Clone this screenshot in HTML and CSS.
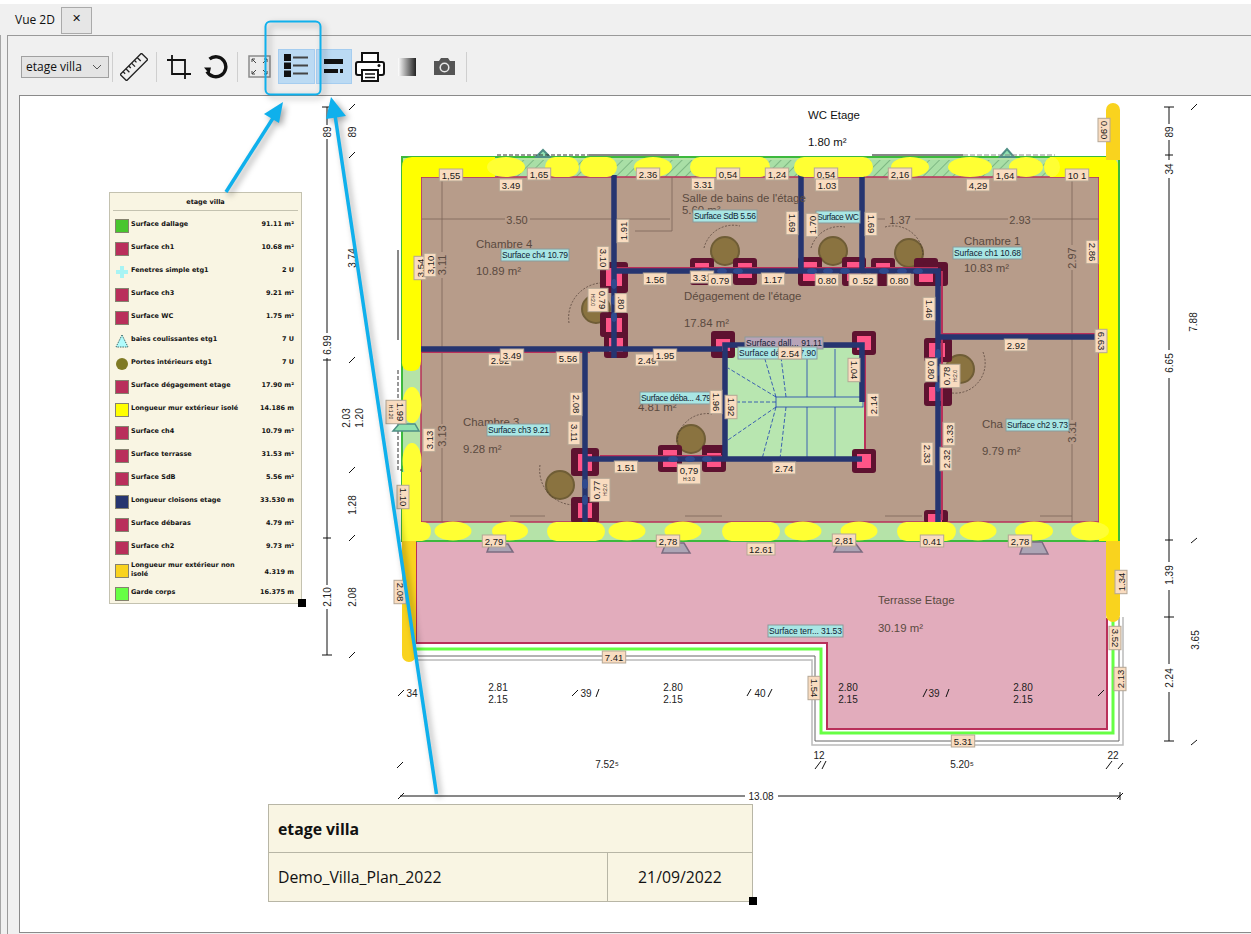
FILE: index.html
```html
<!DOCTYPE html>
<html lang="fr">
<head>
    <meta charset="UTF-8">
    <title>Vue 2D</title>
    <link rel="stylesheet" href="styles.css">
</head>
<body>

<div class="tabs">
    <span class="tab-title">Vue 2D</span>
    <button class="tab-close">&#x2715;</button>
</div>

<div class="workspace">
<div class="panel">
    <div class="toolbar">
        <div class="combo">etage villa
            <svg class="combo-arrow" width="10" height="6" viewBox="0 0 10 6"><path d="M1 1l4 4 4-4" fill="none" stroke="#555"/></svg>
        </div>
        <span class="sep"></span>
        <div class="tool tool-ruler">
            <svg width="28" height="28" viewBox="0 0 28 28"><g transform="rotate(-45 14 14)" fill="none" stroke="#222" stroke-width="1.3"><rect x="-1" y="9.5" width="30" height="9"/><path d="M3 9.5v3M7 9.5v5M11 9.5v3M15 9.5v5M19 9.5v3M23 9.5v5"/></g></svg>
        </div>
        <span class="sep"></span>
        <div class="tool tool-crop">
            <svg width="24" height="24" viewBox="0 0 24 24"><path d="M5 0v19h19M0 5h18v19" fill="none" stroke="#111" stroke-width="1.800"/></svg>
        </div>
        <div class="tool tool-rotate">
            <svg width="24" height="24" viewBox="0 0 24 24"><path d="M5.500 4A10 10 0 1 1 3 16.500" fill="none" stroke="#111" stroke-width="3.400"/><path d="M0 12.500l7 0-1.500 6.500z" fill="#111"/></svg>
        </div>
        <span class="sep sep-fit"></span>
        <div class="tool tool-fit">
            <svg width="23" height="23" viewBox="0 0 23 23"><rect x="1" y="1" width="21" height="21" fill="#ececec" stroke="#8a8a8a" stroke-width="1.500"/><path d="M4 4l4 4M4 4h3M4 4v3M19 4l-4 4M19 4h-3M19 4v3M4 19l4-4M4 19h3M4 19v-3M19 19l-4-4M19 19h-3M19 19v-3" fill="none" stroke="#444"/></svg>
        </div>
        <div class="toggle toggle-list">
            <svg width="26" height="24" viewBox="0 0 26 24"><path d="M0 0h7v7H0zM0 8.500h7v6.500H0zM0 16.500h7V23H0z" fill="#111"/><path d="M9 3.500h15M9 11.500h15M9 19.500h15" stroke="#444" stroke-width="2"/></svg>
        </div>
        <div class="toggle toggle-bars">
            <svg width="20" height="14" viewBox="0 0 20 14"><path d="M0 0h19v5H0zM0 10h14v4H0zM16 10h3v4h-3z" fill="#111"/></svg>
        </div>
        <div class="tool tool-print">
            <svg width="30" height="30" viewBox="0 0 30 30"><path d="M7 10V1h16v9" fill="#fff" stroke="#111" stroke-width="2"/><path d="M6 23H3a2 2 0 0 1-2-2V12a2 2 0 0 1 2-2h24a2 2 0 0 1 2 2v9a2 2 0 0 1-2 2h-3" fill="#fff" stroke="#111" stroke-width="2"/><path d="M7 18h16v11H7z" fill="#fff" stroke="#111" stroke-width="2"/><path d="M10 22h10M10 25.500h10" stroke="#111" stroke-width="1.500"/><circle cx="24" cy="13.500" r="1.500" fill="#111"/></svg>
        </div>
        <div class="tool-gradient"></div>
        <div class="tool tool-camera">
            <svg width="23" height="19" viewBox="0 0 23 19"><path d="M1 4h5l2-3h7l2 3h5v14H1z" fill="#555"/><circle cx="11.500" cy="10.500" r="5" fill="#e8e8e8"/><circle cx="11.500" cy="10.500" r="3.500" fill="#555"/></svg>
        </div>
        <span class="sep sep-end"></span>
    </div>

    <div class="canvas">
        <svg class="plan" id="plan" width="1238" height="836" viewBox="20 96 1238 836">
            <defs>
                <pattern id="hatch" width="7" height="7" patternUnits="userSpaceOnUse" patternTransform="rotate(45)">
                    <rect width="7" height="7" fill="#a9dfa6"/>
                    <path d="M0 0v7" stroke="#3d7d4e" stroke-width="0.8"/>
                </pattern>
            </defs>

            <!-- terrasse -->
            <path d="M416 541H1106V618L1107 729H827V643H416z" fill="#e2acbc"/>
            <path d="M416 541V643H827V729H1107V618" fill="none" stroke="#b9305a" stroke-width="2"/>
            <path d="M416 649H821V733H1113V617" fill="none" stroke="#66ff44" stroke-width="3"/>
            <path d="M416 656H815V741H1119V617" fill="none" stroke="#666" stroke-width="1"/>
            <path d="M416 660H812V745H1123V617" fill="none" stroke="#bbb" stroke-width="1.500"/>

            <!-- bande mur exterieur -->
            <rect x="402" y="157" width="717" height="384" fill="#b5e3a8"/>
            <rect x="402" y="157" width="717" height="384" fill="none" stroke="#3db93d" stroke-width="2"/>
            <rect x="420" y="160" width="680" height="17" fill="url(#hatch)"/>
            <path d="M536 157l7-7 7 7z" fill="#8fe0b0" stroke="#4f8f85" stroke-width="2"/>
            <path d="M1000 157l7-8 7 8z" fill="#8fe0b0" stroke="#4f8f85" stroke-width="2"/>

            <!-- fenetres -->
            <g fill="none" stroke="#333" stroke-width="1">
                <path d="M497 155H589" stroke-dasharray="4 2"/>
                <path d="M589 155H679" stroke="#111"/>
                <path d="M872 155H963" stroke="#111"/>
                <path d="M963 155H1055" stroke="#888" stroke-dasharray="5 2"/>
                <path d="M398 250V340" stroke="#111"/>
                <path d="M398 370V470H402" stroke-dasharray="4 2"/>
            </g>

            <!-- pieces -->
            <rect x="421" y="177" width="678" height="345" fill="#b79c8a" stroke="#b9305a" stroke-width="1.500"/>
            <path d="M725 348H865V459H725z" fill="#b8e6b0"/>
            <path d="M865 348V459" stroke="#b9305a" stroke-width="2"/>
            <g fill="none" stroke="#1c3fb0" stroke-width="0.800">
                <path d="M807 349V397M835 349V397M807 407V459M835 407V459" />
                <path d="M776 397L762 349M776 397L728 368M776 407L728 440M776 407L762 459" stroke-dasharray="4 2"/>
                <path d="M786 397L780 349M786 407L780 459M776 402H728" stroke-dasharray="4 2"/>
            </g>
            <rect x="776" y="397" width="87" height="10" fill="#b8e6b0" stroke="#1c3fb0" stroke-width="0.800"/>

            <!-- cotes interieures -->
            <g fill="none" stroke="#7c6658" stroke-width="0.800">
                <path d="M422 219H505M530 219H670"/>
                <path d="M672 177V231H635"/>
                <path d="M442 177V252M442 278V348M442 350V424M442 448V522"/>
                <path d="M1072 177V245M1072 270V337M1072 338V420M1072 444V522"/>
                <path d="M870 219H885M915 219H1008M1032 219H1099"/>
                <path d="M510 516H545M685 516H722M885 516H922M1040 516H1072"/>
            </g>

            <!-- portes -->
            <g fill="#8a7340" stroke="#6f5d36" stroke-width="2">
                <circle cx="725" cy="251" r="14"/>
                <circle cx="596" cy="309" r="14"/>
                <circle cx="833" cy="251" r="14"/>
                <circle cx="909" cy="253" r="14"/>
                <circle cx="691" cy="439" r="14"/>
                <circle cx="560" cy="485" r="14"/>
                <circle cx="960" cy="369" r="14"/>
            </g>
            <g fill="none" stroke="#4a3a30" stroke-width="0.700" stroke-dasharray="2 1.500">
                <path d="M704 248A30 30 0 0 1 740 226"/>
                <path d="M569 323A35 35 0 0 1 600 283"/>
                <path d="M811 248A30 30 0 0 1 845 227"/>
                <path d="M885 227A30 30 0 0 1 923 255"/>
                <path d="M677 442A30 30 0 0 1 712 414"/>
                <path d="M540 465A35 35 0 0 0 575 505"/>
                <path d="M983 352A30 30 0 0 1 952 393"/>
            </g>

            <!-- jambages -->
            <g fill="#5e1230">
                <rect x="600" y="262" width="28" height="31" rx="3"/>
                <rect x="600" y="312" width="28" height="25" rx="3"/>
                <rect x="604" y="333" width="24" height="25" rx="3"/>
                <rect x="690" y="258" width="24" height="27" rx="3"/>
                <rect x="733" y="258" width="24" height="27" rx="3"/>
                <rect x="711" y="331" width="24" height="27" rx="3"/>
                <rect x="798" y="257" width="24" height="29" rx="3"/>
                <rect x="842" y="257" width="24" height="29" rx="3"/>
                <rect x="871" y="258" width="24" height="28" rx="3"/>
                <rect x="914" y="258" width="24" height="28" rx="3"/>
                <rect x="923" y="262" width="25" height="24" rx="3"/>
                <rect x="852" y="331" width="24" height="24" rx="3"/>
                <rect x="924" y="338" width="28" height="24" rx="3"/>
                <rect x="924" y="382" width="28" height="24" rx="3"/>
                <rect x="852" y="449" width="24" height="24" rx="3"/>
                <rect x="924" y="510" width="24" height="13" rx="3"/>
                <rect x="571" y="448" width="28" height="28" rx="3"/>
                <rect x="571" y="497" width="28" height="26" rx="3"/>
                <rect x="658" y="445" width="24" height="27" rx="3"/>
                <rect x="702" y="445" width="24" height="27" rx="3"/>
            </g>
            <g fill="#ff5588">
                <rect x="606" y="268" width="16" height="18"/>
                <rect x="606" y="318" width="16" height="14"/>
                <rect x="609" y="338" width="14" height="14"/>
                <rect x="695" y="263" width="14" height="15"/>
                <rect x="738" y="263" width="14" height="15"/>
                <rect x="716" y="339" width="14" height="12"/>
                <rect x="803" y="262" width="14" height="19"/>
                <rect x="847" y="262" width="14" height="19"/>
                <rect x="876" y="263" width="14" height="9"/>
                <rect x="919" y="268" width="14" height="14"/>
                <rect x="857" y="336" width="14" height="14"/>
                <rect x="929" y="343" width="16" height="14"/>
                <rect x="929" y="387" width="12" height="14"/>
                <rect x="857" y="454" width="14" height="14"/>
                <rect x="928" y="514" width="14" height="9"/>
                <rect x="578" y="454" width="14" height="17"/>
                <rect x="578" y="503" width="14" height="15"/>
                <rect x="663" y="450" width="14" height="17"/>
                <rect x="707" y="453" width="14" height="14"/>
            </g>

            <!-- cloisons -->
            <path d="M614 268H938M942 334H1099M420 352H590M600 456H722M942 271V520" fill="none" stroke="#b9305a" stroke-width="2"/>
            <g fill="none" stroke="#263570" stroke-width="5.500">
                <path d="M614 175V358M801 175V271M862 175V271M614 271H938V522M938 337H1099"/>
                <path d="M420 349H722M725 459V345H862V402M585 349V522M585 459H862"/>
            </g>
            <g fill="#2f4a8e">
                <ellipse cx="614" cy="284" rx="3" ry="5"/>
                <ellipse cx="614" cy="300" rx="3" ry="5"/>
                <ellipse cx="614" cy="317" rx="3" ry="5"/>
                <ellipse cx="585" cy="484" rx="3" ry="5"/>
                <ellipse cx="585" cy="500" rx="3" ry="5"/>
                <ellipse cx="938" cy="354" rx="3" ry="5"/>
                <ellipse cx="938" cy="371" rx="3" ry="5"/>
                <ellipse cx="938" cy="387" rx="3" ry="5"/>
                <ellipse cx="705" cy="271" rx="5" ry="3"/>
                <ellipse cx="722" cy="271" rx="5" ry="3"/>
                <ellipse cx="738" cy="271" rx="5" ry="3"/>
                <ellipse cx="812" cy="271" rx="5" ry="3"/>
                <ellipse cx="828" cy="271" rx="5" ry="3"/>
                <ellipse cx="845" cy="271" rx="5" ry="3"/>
                <ellipse cx="884" cy="271" rx="5" ry="3"/>
                <ellipse cx="902" cy="271" rx="5" ry="3"/>
                <ellipse cx="918" cy="271" rx="5" ry="3"/>
                <ellipse cx="673" cy="459" rx="5" ry="3"/>
                <ellipse cx="690" cy="459" rx="5" ry="3"/>
                <ellipse cx="707" cy="459" rx="5" ry="3"/>
            </g>

            <!-- mur exterieur isole -->
            <path d="M402 167Q402 157 412 157H495V177H421V361Q421 371 411 371T402 361z" fill="#ffff00"/>
            <path d="M1050 157H1108Q1118 157 1118 167V541H1099V177H1050z" fill="#ffff00"/>
            <g fill="#ffff33">
                <ellipse cx="412" cy="405" rx="9.500" ry="18"/>
                <ellipse cx="412" cy="461" rx="9.500" ry="18"/>
                <path d="M402 472H421V522H422Q431 522 431 531T422 541H402z"/>
                <ellipse cx="506" cy="167" rx="19" ry="10"/>
                <rect x="545" y="157" width="34" height="20" rx="10"/>
                <rect x="580" y="157" width="37" height="20" rx="10"/>
                <ellipse cx="653" cy="167" rx="19" ry="10"/>
                <rect x="690" y="157" width="80" height="20" rx="10"/>
                <rect x="794" y="157" width="79" height="20" rx="10"/>
                <ellipse cx="910" cy="167" rx="19" ry="10"/>
                <ellipse cx="970" cy="167" rx="22" ry="10"/>
                <ellipse cx="1026" cy="167" rx="17" ry="10"/>
                <ellipse cx="1052" cy="167" rx="8" ry="10"/>
                <ellipse cx="453" cy="531" rx="18.500" ry="9.500"/>
                <ellipse cx="510" cy="531" rx="18" ry="9.500"/>
                <rect x="547" y="522" width="58" height="19" rx="9.500"/>
                <ellipse cx="627" cy="531" rx="18.500" ry="9.500"/>
                <ellipse cx="683" cy="531" rx="18.500" ry="9.500"/>
                <rect x="722" y="522" width="58" height="19" rx="9.500"/>
                <ellipse cx="803" cy="531" rx="18.500" ry="9.500"/>
                <ellipse cx="859" cy="531" rx="18.500" ry="9.500"/>
                <rect x="897" y="522" width="59" height="19" rx="9.500"/>
                <ellipse cx="978" cy="531" rx="18.500" ry="9.500"/>
                <ellipse cx="1034" cy="531" rx="19" ry="9.500"/>
                <ellipse cx="1090" cy="531" rx="19" ry="9.500"/>
            </g>

            <!-- mur non isole -->
            <g fill="#f9d31e">
                <path d="M1106 160V110a7 7 0 0 1 14 0V160z"/>
                <path d="M1106 541H1120V615a7 7 0 0 1-14 0z"/>
                <path d="M402 541H416V655a7 7 0 0 1-14 0z"/>
            </g>

            <!-- seuils -->
            <g fill="#aca5b5" stroke="#7c6c80" stroke-width="1.500">
                <path d="M490 544H508L513 552H487z"/>
                <path d="M666 543H684L690 553H662z"/>
                <path d="M838 544H856L862 552H834z"/>
                <path d="M1024 542H1042L1048 554H1020z"/>
            </g>
            <path d="M393 431L399 424H415L419 431z" fill="#8fe0b0" stroke="#4f8f85" stroke-width="1.500"/>

            <!-- lignes de cote -->
            <g fill="none" stroke="#111" stroke-width="1">
                <path d="M327 107V125M327 139V333M327 358V585M327 609V655"/>
                <path d="M322 107H332M322 655H332M323 360H331M323 538H331"/>
                <path d="M1169 107V124M1169 140V160M1169 178V350M1169 378V562M1169 590V664M1169 692V741"/>
                <path d="M1164 107H1174M1164 617H1174M1164 741H1174M1165 155H1173M1165 540H1173"/>
                <path d="M400 796H745M778 796H1120"/>
                <path d="M398 799L404 793M1117 799L1123 793M1120 792V800"/>
                <path d="M349 110L355 104M349 158L355 152M349 363L355 357M349 473L355 467M349 541L355 535M349 658L355 652"/>
                <path d="M1191 543L1197 538M1191 745L1197 740M1191 110L1197 104"/>
                <path d="M397 768L403 762M815 769L821 761M822 769L826 761M1106 769L1112 761M1118 769L1123 763"/>
                <path d="M398 696L404 690M572 696L578 690M596 697L599 689M747 696L751 689M768 697L772 689M923 697L927 689M946 697L949 689M1098 696L1104 690"/>
            </g>
        </svg>

        <div class="legend">
            <div class="legend-title">etage villa</div>
            <div class="legend-row"><span class="swatch sw-dallage"></span><span class="legend-name">Surface dallage</span><span class="legend-value">91.11 m²</span></div>
            <div class="legend-row"><span class="swatch sw-surface"></span><span class="legend-name">Surface ch1</span><span class="legend-value">10.68 m²</span></div>
            <div class="legend-row"><span class="swatch sw-shape"><svg width="14" height="14" viewBox="0 0 14 14"><path d="M5 1h4v4h4v4H9v4H5V9H1V5h4z" fill="#a8f4f4"/></svg></span><span class="legend-name">Fenetres simple etg1</span><span class="legend-value">2 U</span></div>
            <div class="legend-row"><span class="swatch sw-surface"></span><span class="legend-name">Surface ch3</span><span class="legend-value">9.21 m²</span></div>
            <div class="legend-row"><span class="swatch sw-surface"></span><span class="legend-name">Surface WC</span><span class="legend-value">1.75 m²</span></div>
            <div class="legend-row"><span class="swatch sw-shape"><svg width="14" height="14" viewBox="0 0 14 14"><path d="M7 1l6 12H1z" fill="#b0fbfb" stroke="#3c6a6a" stroke-dasharray="1.500 1"/></svg></span><span class="legend-name">baies coulissantes etg1</span><span class="legend-value">7 U</span></div>
            <div class="legend-row"><span class="swatch sw-shape"><svg width="14" height="14" viewBox="0 0 14 14"><circle cx="7" cy="7" r="6" fill="#7f7a24"/></svg></span><span class="legend-name">Portes intérieurs etg1</span><span class="legend-value">7 U</span></div>
            <div class="legend-row"><span class="swatch sw-surface"></span><span class="legend-name">Surface dégagement etage</span><span class="legend-value">17.90 m²</span></div>
            <div class="legend-row"><span class="swatch sw-isole"></span><span class="legend-name">Longueur mur extérieur isolé</span><span class="legend-value">14.186 m</span></div>
            <div class="legend-row"><span class="swatch sw-surface"></span><span class="legend-name">Surface ch4</span><span class="legend-value">10.79 m²</span></div>
            <div class="legend-row"><span class="swatch sw-surface"></span><span class="legend-name">Surface terrasse</span><span class="legend-value">31.53 m²</span></div>
            <div class="legend-row"><span class="swatch sw-surface"></span><span class="legend-name">Surface SdB</span><span class="legend-value">5.56 m²</span></div>
            <div class="legend-row"><span class="swatch sw-cloison"></span><span class="legend-name">Longueur cloisons etage</span><span class="legend-value">33.530 m</span></div>
            <div class="legend-row"><span class="swatch sw-surface"></span><span class="legend-name">Surface débaras</span><span class="legend-value">4.79 m²</span></div>
            <div class="legend-row"><span class="swatch sw-surface"></span><span class="legend-name">Surface ch2</span><span class="legend-value">9.73 m²</span></div>
            <div class="legend-row legend-row-tall"><span class="swatch sw-nonisole"></span><span class="legend-name">Longueur mur extérieur non isolé</span><span class="legend-value">4.319 m</span></div>
            <div class="legend-row"><span class="swatch sw-garde"></span><span class="legend-name">Garde corps</span><span class="legend-value">16.375 m</span></div>
            <span class="handle"></span>
        </div>

        <div class="title-block">
            <div class="title-name">etage villa</div>
            <div class="title-file">Demo_Villa_Plan_2022</div>
            <div class="title-date">21/09/2022</div>
            <span class="handle"></span>
        </div>
    </div>
</div>
</div>

<svg class="callouts" width="1251" height="934" viewBox="0 0 1251 934">
    <rect x="265.500" y="21.500" width="55" height="73" rx="5" fill="none" stroke="#0fb0ec" stroke-width="2"/>
    <path d="M226 192L275 115" stroke="#0fb0ec" stroke-width="3.500"/>
    <path d="M283 102L264 114L279 123z" fill="#0fb0ec"/>
    <path d="M436.500 794L335 115" stroke="#0fb0ec" stroke-width="3.500"/>
    <path d="M331 97L326 119L346 116z" fill="#0fb0ec"/>
</svg>

<script src="plan.js"></script>
</body>
</html>
```

FILE: styles.css
```css
* {
    box-sizing: border-box;
}
html, body {
    margin: 0;
    padding: 0;
}
body {
    width: 1251px;
    height: 934px;
    overflow: hidden;
    position: relative;
    background-color: #f0f0f0;
    border-top: 4px solid #fff;
    font-family: "Open Sans", "Noto Sans", sans-serif;
    color: #111;
}
.tabs {
    height: 31px;
    display: flex;
    align-items: flex-start;
    padding: 3px 0 0 15px;
}
.tab-title {
    font-size: 12px;
    line-height: 26px;
    width: 46px;
}
.tab-close {
    width: 31px;
    height: 27px;
    border: 1px solid #aaa;
    background-color: #e6e6e6;
    padding: 0 0 4px;
    font-size: 11px;
    font-weight: bold;
    font-family: "DejaVu Sans", sans-serif;
    color: #111;
}
.workspace {
    height: 899px;
    border-left: 1px solid #a5a5a5;
    padding-left: 6px;
}
.panel {
    height: 899px;
    border-left: 1px solid #9a9a9a;
    border-top: 1px solid #9a9a9a;
    padding-left: 11px;
}
.toolbar {
    height: 59px;
    display: flex;
    align-items: center;
    padding: 2px 0 0 2px;
}
.combo {
    width: 88px;
    height: 22px;
    border: 1px solid #a0a0a0;
    background-color: #e4e4e4;
    font-size: 12px;
    line-height: 20px;
    padding-left: 4px;
    position: relative;
    flex: none;
}
.combo-arrow {
    position: absolute;
    right: 6px;
    top: 7px;
}
.sep {
    width: 1px;
    height: 30px;
    background-color: #cfcfcf;
    flex: none;
    margin-left: 3px;
}
.tool {
    display: flex;
    align-items: center;
    justify-content: center;
    flex: none;
}
.tool-ruler {
    width: 28px;
    margin: 0 5px 0 7px;
}
.tool-crop {
    width: 24px;
    margin: 0 13px 0 10px;
}
.tool-rotate {
    width: 24px;
    margin-right: 7px;
}
.sep-fit {
    margin-left: 2px;
}
.tool-fit {
    width: 23px;
    margin: 0 7px 0 10px;
}
.toggle {
    width: 37px;
    height: 35px;
    flex: none;
    margin-top: -1px;
    background-color: #bbdaf3;
    border: 1px solid #a5cdf0;
    display: flex;
    align-items: center;
    justify-content: center;
}
.toggle-list {
    margin-right: 1px;
}
.toggle-bars {
    width: 36px;
    margin-right: 3px;
}
.tool-print {
    width: 30px;
}
.tool-gradient {
    width: 18px;
    height: 18px;
    margin: 0 17px 0 13px;
    flex: none;
    background: linear-gradient(to right, #fff, #222);
}
.tool-camera {
    width: 23px;
}
.sep-end {
    margin-left: 10px;
}
.canvas {
    position: relative;
    width: 1240px;
    height: 838px;
    background-color: #fff;
    border: 1px solid #8a8a8a;
}
.plan {
    display: block;
}
.plan-label rect {
    stroke: #b5a795;
    stroke-width: 1;
}
.plan-text {
    font-family: "Liberation Sans", sans-serif;
    font-size: 9.5px;
    fill: #1a1a1a;
    text-anchor: middle;
    dominant-baseline: central;
}
.plan-sub {
    font-size: 5px;
}
.surface-text {
    font-family: "Liberation Sans", sans-serif;
    font-size: 8.5px;
    fill: #123;
}
.room-text {
    font-family: "Liberation Sans", sans-serif;
    font-size: 11.4px;
    fill: #5a4a40;
}
.room-black {
    fill: #111;
}
.dim-text {
    font-family: "Liberation Sans", sans-serif;
    font-size: 10px;
    fill: #222;
    text-anchor: middle;
    dominant-baseline: central;
}
.dim-grey {
    fill: #5a4a40;
    font-size: 11px;
}
.legend {
    position: absolute;
    left: 89px;
    top: 96px;
    width: 193px;
    height: 412px;
    background-color: #f9f5e3;
    border: 1px solid #c4c2b0;
    padding: 0 7px 0 5px;
    font-family: "DejaVu Sans", sans-serif;
    font-size: 6.5px;
    font-weight: bold;
    color: #111;
}
.legend-title {
    height: 18px;
    line-height: 18px;
    text-align: center;
    border-bottom: 1px solid #c4c2b0;
    margin: 0 -4px 8px -2px;
}
.legend-row {
    display: flex;
    height: 23px;
    line-height: 9px;
}
.legend-row-tall .legend-name {
    margin-top: -4px;
}
.legend-row-tall .legend-value {
    padding-top: 4px;
}
.legend-name {
    width: 112px;
    padding-top: 1px;
}
.legend-value {
    margin-left: auto;
    padding-top: 1px;
    white-space: nowrap;
}
.swatch {
    width: 14px;
    height: 14px;
    margin-right: 2px;
    flex: none;
    border: 1px solid #85826f;
}
.sw-dallage { background-color: #48c62e; }
.sw-surface { background-color: #b92f5b; }
.sw-isole { background-color: #ffff00; }
.sw-cloison { background-color: #263570; }
.sw-nonisole { background-color: #f9d31e; }
.sw-garde { background-color: #66ff44; }
.sw-shape {
    border: none;
}
.sw-shape svg {
    display: block;
}
.handle {
    position: absolute;
    right: -5px;
    bottom: -4px;
    width: 8px;
    height: 8px;
    background-color: #000;
}
.title-block {
    position: absolute;
    left: 248px;
    top: 708px;
    width: 485px;
    height: 98px;
    background-color: #f9f5e3;
    border: 1px solid #b8b6a6;
    display: grid;
    grid-template-columns: 339px 1fr;
    grid-template-rows: 48px 1fr;
    font-size: 15.8px;
}
.title-name {
    grid-column: span 2;
    font-weight: bold;
    line-height: 48px;
    padding-left: 9px;
    border-bottom: 1px solid #b8b6a6;
}
.title-file {
    line-height: 48px;
    padding-left: 9px;
    border-right: 1px solid #b8b6a6;
}
.title-date {
    line-height: 48px;
    text-align: center;
}
.callouts {
    position: absolute;
    left: 0;
    top: -4px;
    pointer-events: none;
    filter: drop-shadow(3px 3px 3px rgba(0, 0, 0, 0.35));
}
```

FILE: plan.js
```js
// etiquettes du plan : x, y, texte, rotation, hauteur sous linteau
const svg = document.getElementById('plan');
const NS = 'http://www.w3.org/2000/svg';

const dimLabels = [
    [451, 175, '1,55'], [511, 185, '3.49'], [539, 174, '1,65'], [648, 174, '2.36'],
    [703, 184, '3.31'], [728, 174, '0,54'], [777, 174, '1,24'], [826, 174, '0,54'],
    [827, 185, '1.03'], [900, 174, '2,16'], [978, 185, '4,29'], [1005, 175, '1,64'],
    [1077, 175, '10 1'], [420, 268, '3,54', -90], [430, 265, '3,10', -90],
    [603, 258, '3.10', 90], [623, 231, '1.91', -90], [655, 279, '1.56'],
    [702, 277, '3.31'], [720, 280, '0.79'], [602, 300, '0.79', 90, 'H:2.0'], [621, 303, '.80', 90],
    [792, 223, '1.69', 90], [812, 225, '1.70', -90], [871, 224, '1.69', 90],
    [773, 279, '1.17'], [827, 280, '0.80'], [863, 280, '0 .52'], [899, 280, '0.80'],
    [929, 309, '1.46', 90], [1092, 252, '2.86', 90], [1016, 345, '2.92'],
    [1101, 341, '6.63', 90], [1104, 130, '0.90', 90], [500, 360, '2.92'], [512, 355, '3.49'],
    [568, 358, '5.56'], [647, 360, '2.49'], [665, 355, '1.95'], [576, 404, '2.08', 90],
    [574, 433, '3.11', 90], [400, 412, '1.99', 90, 'H:1.20'], [429, 440, '3.13', -90],
    [403, 497, '1.10', 90], [626, 467, '1.51'], [716, 402, '1.96', 90], [731, 407, '1.92', 90],
    [689, 470, '0,79', 0, 'H:3.0'], [596, 490, '0.77', -90, 'H:2.0'], [494, 541, '2,79'], [668, 541, '2,78'],
    [761, 549, '12.61'], [790, 353, '2.54'], [854, 370, '1.04', 90],
    [873, 405, '2.14', -90], [931, 370, '0.80', 90], [946, 376, '0.78', -90, 'H:2.0'],
    [949, 434, '3.33', -90], [927, 454, '2.33', 90], [946, 459, '2.32', -90],
    [844, 540, '2,81'], [932, 541, '0.41'], [1020, 541, '2,78'], [784, 468, '2.74'],
    [400, 592, '2.08', 90], [614, 657, '7.41'], [814, 688, '1.54', 90],
    [1121, 582, '1.34', -90], [1115, 638, '3.52', 90], [1120, 679, '2.13', -90], [963, 741, '5.31']
];

// x, y, largeur, texte
const surfaces = [
    [745, 337, 78, 'Surface dall... 91.11', true],
    [501, 249, 68, 'Surface ch4 10.79'], [693, 210, 64, 'Surface SdB 5.56'],
    [816, 211, 44, 'Surface WC'], [953, 247, 69, 'Surface ch1 10.68'],
    [487, 424, 63, 'Surface ch3 9.21'], [640, 392, 72, 'Surface déba... 4.79'],
    [738, 347, 79, 'Surface dég... 17.90'], [1006, 419, 63, 'Surface ch2 9.73'],
    [768, 625, 75, 'Surface terr... 31.53']
];

const roomTexts = [
    [476, 248, 'Chambre 4'], [476, 275, '10.89 m²'], [682, 202, "Salle de bains de l'étage"],
    [682, 214, '5.60 m²'], [684, 300, "Dégagement de l'étage"], [684, 327, '17.84 m²'],
    [964, 245, 'Chambre 1'], [964, 272, '10.83 m²'], [463, 426, 'Chambre 3'], [463, 453, '9.28 m²'],
    [638, 411, '4.81 m²'], [982, 428, 'Cha'], [982, 455, '9.79 m²'],
    [878, 604, 'Terrasse Etage'], [878, 632, '30.19 m²'],
    [808, 119, 'WC Etage', 'room-black'], [808, 146, '1.80 m²', 'room-black']
];

const dims = [
    [327, 132, '89', -90], [327, 345, '6.99', -90], [327, 597, '2.10', -90],
    [352, 132, '89', -90], [352, 258, '3.74', -90], [346, 418, '2.03', -90], [359, 418, '1.20', -90],
    [352, 505, '1.28', -90], [352, 597, '2.08', -90],
    [1169, 132, '89', -90], [1169, 169, '34', -90], [1169, 363, '6.65', -90], [1169, 575, '1.39', -90],
    [1169, 678, '2.24', -90], [1193, 322, '7.88', -90], [1195, 640, '3.65', -90], [761, 796, '13.08'],
    [498, 687, '2.81'], [498, 699, '2.15'], [673, 687, '2.80'], [673, 699, '2.15'],
    [848, 687, '2.80'], [848, 699, '2.15'], [1023, 687, '2.80'], [1023, 699, '2.15'],
    [412, 693, '34'], [586, 693, '39'], [760, 693, '40'], [934, 693, '39'],
    [607, 764, '7.52⁵'], [962, 764, '5.20⁵'], [819, 755, '12'], [1113, 755, '22']
];

// cotes grises dans les pieces
const innerDims = [
    [517, 220, '3.50'], [900, 220, '1.37'], [1020, 220, '2.93'], [442, 265, '3.11', -90],
    [442, 436, '3.13', -90], [1072, 258, '2.97', -90], [1072, 432, '3.31', -90]
];

function make(tag, attrs, parent) {
    const el = document.createElementNS(NS, tag);
    for (const key in attrs) el.setAttribute(key, attrs[key]);
    parent.appendChild(el);
    return el;
}

function addDim(list, cls) {
    list.forEach(([x, y, text, rot]) => {
        const t = make('text', { x, y, class: cls }, svg);
        if (rot) t.setAttribute('transform', `rotate(${rot} ${x} ${y})`);
        t.textContent = text;
    });
}

addDim(dims, 'dim-text');
addDim(innerDims, 'dim-text dim-grey');

roomTexts.forEach(([x, y, text, extra]) => {
    const t = make('text', { x, y, class: 'room-text ' + (extra || '') }, svg);
    t.textContent = text;
});

surfaces.forEach(([x, y, w, text, muted]) => {
    make('rect', { x, y, width: w, height: 12, fill: muted ? '#b8a4b8' : '#a8e6e4', stroke: '#8b9a9a' }, svg);
    const t = make('text', { x: x + 1, y: y + 9, class: 'surface-text', textLength: w - 2 }, svg);
    t.textContent = text;
});

dimLabels.forEach(([x, y, text, rot, sub]) => {
    const g = make('g', { class: 'plan-label' }, svg);
    if (rot) g.setAttribute('transform', `rotate(${rot} ${x} ${y})`);
    const w = text.length * 4.6 + 5;
    const h = sub ? 20 : 12;
    make('rect', { x: x - w / 2, y: y - 6, width: w, height: h, fill: '#f9dcc0' }, g);
    const t = make('text', { x, y, class: 'plan-text' }, g);
    t.textContent = text;
    if (sub) {
        const s = make('text', { x, y: y + 9, class: 'plan-text plan-sub' }, g);
        s.textContent = sub;
    }
});
```
